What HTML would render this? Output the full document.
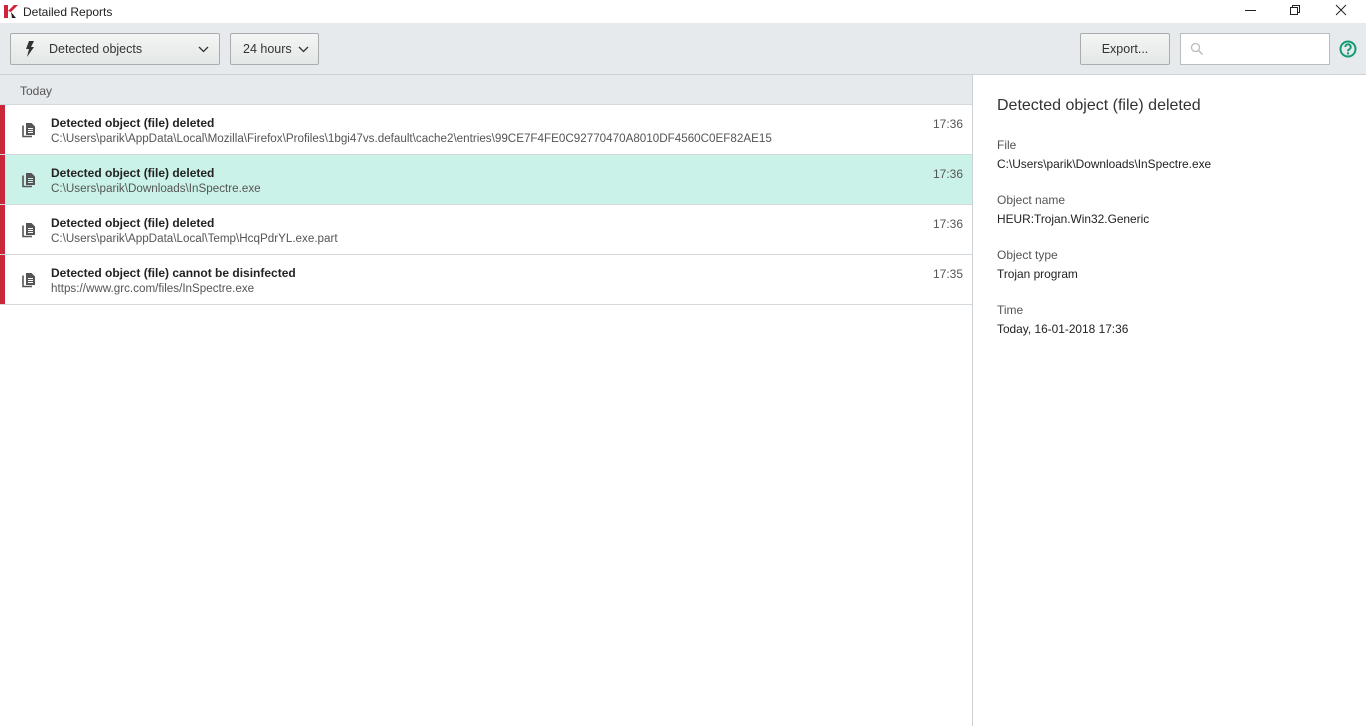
<!DOCTYPE html>
<html><head><style>
*{margin:0;padding:0;box-sizing:border-box}
body{width:1366px;height:726px;overflow:hidden;background:#fff;font-family:"Liberation Sans",sans-serif;color:#222;position:relative}
.abs{position:absolute}
.btn{position:absolute;top:33px;height:32px;border:1px solid #a9adaf;border-radius:2px;background:linear-gradient(#f4f5f5,#e3e7e6);font-size:12.5px;color:#333;line-height:31px}
.row{position:absolute;left:0;width:972px;height:50px;border-bottom:1px solid #d2d8dc;background:#fff}
.row .bar{position:absolute;left:0;top:0;width:5px;height:49px;background:#c8283a}
.row .t{position:absolute;left:51px;top:11px;font-weight:bold;font-size:12px;color:#222}
.row .p{position:absolute;left:51px;top:27px;font-size:11.65px;color:#555}
.row .tm{position:absolute;right:9px;top:12px;font-size:12px;color:#555}
.row svg{position:absolute;left:21px;top:17px}
.lbl{position:absolute;left:997px;font-size:12px;color:#555}
.val{position:absolute;left:997px;font-size:11.9px;color:#222}
</style></head><body>
<svg class="abs" style="left:4px;top:5px" width="14" height="13" viewBox="0 0 14 13"><path d="M0 0h4v13H0z" fill="#d0223a"/><path d="M4 6L10 0h4L7 7z" fill="#d0223a"/><path d="M7 7l5 6H8z" fill="#222"/></svg>
<div class="abs" style="left:23px;top:5px;font-size:12px">Detailed Reports</div>
<div class="abs" style="left:1245px;top:10px;width:11px;height:1px;background:#222"></div>
<svg class="abs" style="left:1289px;top:4px" width="12" height="12"><rect x="1.5" y="3.5" width="7" height="7" fill="none" stroke="#222"/><path d="M3.5 3.5V1.5h7v7h-2" fill="none" stroke="#222"/></svg>
<svg class="abs" style="left:1335px;top:4px" width="12" height="12"><path d="M1 1l10 10M11 1L1 11" stroke="#222"/></svg>
<div class="abs" style="left:0;top:23px;width:1366px;height:52px;background:#e6eaed;border-bottom:1px solid #ccd2d5"></div>
<div class="btn" style="left:10px;width:210px">
<svg class="abs" style="left:14px;top:7px" width="10" height="16" viewBox="0 0 10 16"><path d="M4 0h5L6 6h3L2 16l2-8H1z" fill="#333"/></svg>
<span class="abs" style="left:38px">Detected objects</span>
<svg class="abs" style="left:187px;top:12px" width="11" height="7"><path d="M1 1l4.5 4.5L10 1" fill="none" stroke="#333" stroke-width="1.3"/></svg></div>
<div class="btn" style="left:230px;width:89px"><span class="abs" style="left:12px">24 hours</span>
<svg class="abs" style="left:67px;top:12px" width="11" height="7"><path d="M1 1l4.5 4.5L10 1" fill="none" stroke="#333" stroke-width="1.3"/></svg></div>
<div class="btn" style="left:1080px;width:90px;text-align:center">Export...</div>
<div class="abs" style="left:1180px;top:33px;width:150px;height:32px;border:1px solid #b9bdbf;background:#fff">
<svg class="abs" style="left:9px;top:8px" width="14" height="14"><circle cx="5.5" cy="5.5" r="4" fill="none" stroke="#bbb" stroke-width="1.3"/><path d="M8.5 8.5l4 4" stroke="#bbb" stroke-width="1.5"/></svg></div>
<svg class="abs" style="left:1339px;top:40px" width="18" height="18" viewBox="0 0 18 18"><circle cx="9" cy="9" r="7.5" fill="none" stroke="#159a72" stroke-width="2"/><path d="M6.3 7a2.7 2.7 0 1 1 3.7 2.5c-.8.4-1 .8-1 1.7" fill="none" stroke="#159a72" stroke-width="2"/><circle cx="9" cy="13.4" r="1.2" fill="#159a72"/></svg>
<div class="abs" style="left:0;top:75px;width:972px;height:30px;background:#e6eaed;border-bottom:1px solid #d2d8dc"><span class="abs" style="left:20px;top:9px;font-size:12px;color:#555">Today</span></div>
<div class="abs" style="left:972px;top:75px;width:1px;height:651px;background:#ccd2d5"></div>

<div class="row" style="top:105px"><div class="bar"></div><svg width="16" height="16" viewBox="0 0 16 16"><path d="M2 3.5v11h9" fill="none" stroke="#555" stroke-width="1.6"/><path d="M5 1h5.5l3.5 3.5v8.5H5z" fill="#555"/><path d="M7 6.5h5M7 8.5h5M7 10.5h5" stroke="#fff"/></svg>
<div class="t">Detected object (file) deleted</div><div class="p">C:\Users\parik\AppData\Local\Mozilla\Firefox\Profiles\1bgi47vs.default\cache2\entries\99CE7F4FE0C92770470A8010DF4560C0EF82AE15</div><div class="tm">17:36</div></div>
<div class="row" style="top:155px;background:#cbf2e9"><div class="bar"></div><svg width="16" height="16" viewBox="0 0 16 16"><path d="M2 3.5v11h9" fill="none" stroke="#555" stroke-width="1.6"/><path d="M5 1h5.5l3.5 3.5v8.5H5z" fill="#555"/><path d="M7 6.5h5M7 8.5h5M7 10.5h5" stroke="#cbf2e9"/></svg>
<div class="t">Detected object (file) deleted</div><div class="p">C:\Users\parik\Downloads\InSpectre.exe</div><div class="tm">17:36</div></div>
<div class="row" style="top:205px"><div class="bar"></div><svg width="16" height="16" viewBox="0 0 16 16"><path d="M2 3.5v11h9" fill="none" stroke="#555" stroke-width="1.6"/><path d="M5 1h5.5l3.5 3.5v8.5H5z" fill="#555"/><path d="M7 6.5h5M7 8.5h5M7 10.5h5" stroke="#fff"/></svg>
<div class="t">Detected object (file) deleted</div><div class="p">C:\Users\parik\AppData\Local\Temp\HcqPdrYL.exe.part</div><div class="tm">17:36</div></div>
<div class="row" style="top:255px"><div class="bar"></div><svg width="16" height="16" viewBox="0 0 16 16"><path d="M2 3.5v11h9" fill="none" stroke="#555" stroke-width="1.6"/><path d="M5 1h5.5l3.5 3.5v8.5H5z" fill="#555"/><path d="M7 6.5h5M7 8.5h5M7 10.5h5" stroke="#fff"/></svg>
<div class="t">Detected object (file) cannot be disinfected</div><div class="p">https://www.grc.com/files/InSpectre.exe</div><div class="tm">17:35</div></div>

<div class="abs" style="left:997px;top:97px;font-size:16px;color:#333">Detected object (file) deleted</div>
<div class="lbl" style="top:138px">File</div><div class="val" style="top:157px">C:\Users\parik\Downloads\InSpectre.exe</div>
<div class="lbl" style="top:193px">Object name</div><div class="val" style="top:212px">HEUR:Trojan.Win32.Generic</div>
<div class="lbl" style="top:248px">Object type</div><div class="val" style="top:267px">Trojan program</div>
<div class="lbl" style="top:303px">Time</div><div class="val" style="top:322px">Today, 16-01-2018 17:36</div>
</body></html>
